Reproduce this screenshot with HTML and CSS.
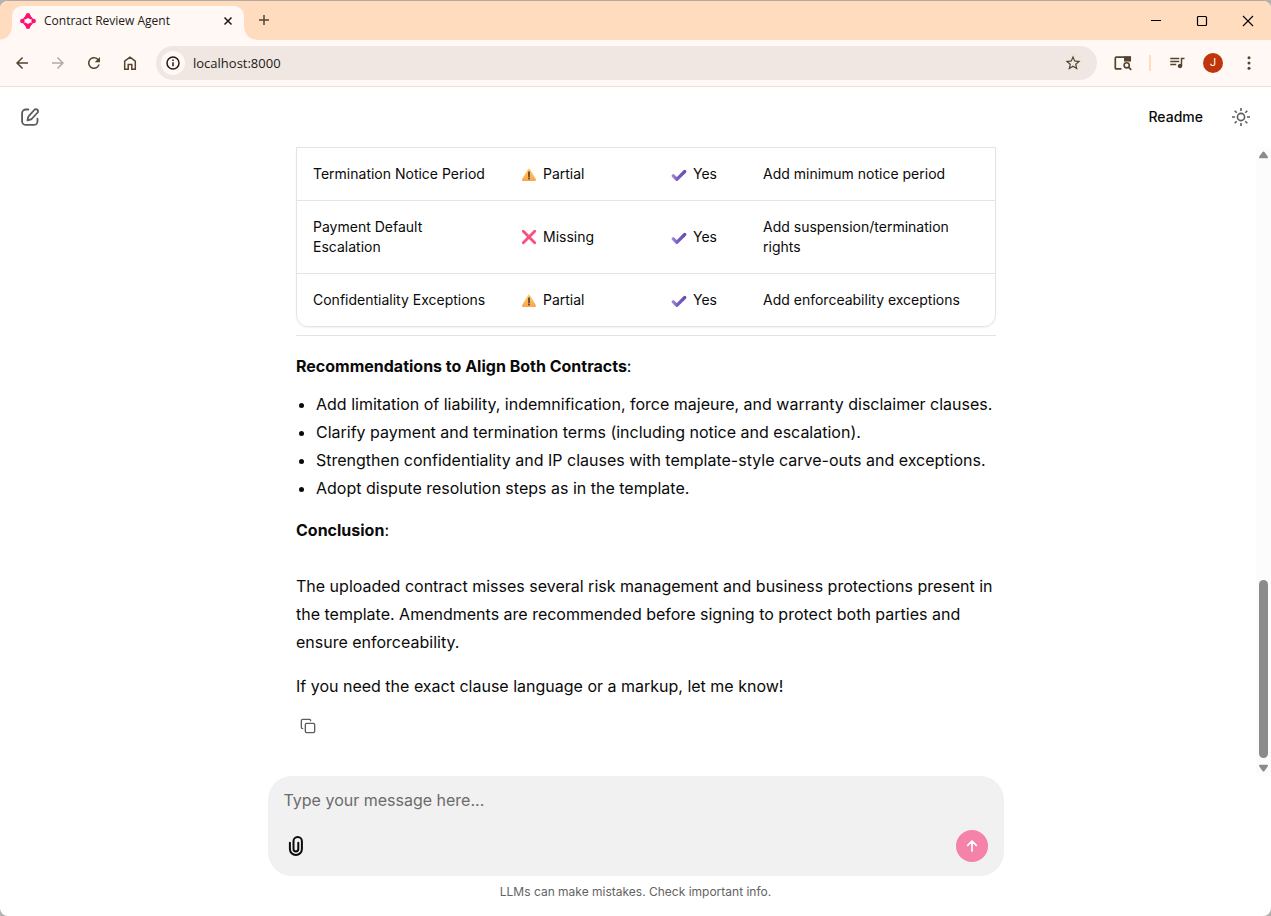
FILE: index.html
```html
<!DOCTYPE html>
<html lang="en">
<head>
<meta charset="utf-8">
<title>Contract Review Agent</title>
<link rel="stylesheet" href="styles.css">
</head>
<body>
<div class="window">
  <div class="tabstrip">
    <div class="tab">
      <svg class="favicon" viewBox="0 0 16 16" width="16" height="16"><circle cx="8" cy="8" r="4.600" fill="none" stroke="#ff0f72" stroke-width="1.700"/><g fill="#ff0f72"><circle cx="8" cy="2.300" r="2.200"/><circle cx="13.700" cy="8" r="2.200"/><circle cx="8" cy="13.700" r="2.200"/><circle cx="2.300" cy="8" r="2.200"/><path d="m5.900 1.800-1.700 3.600 1.200 1 2.600-1.300 2.600 1.300 1.200-1-1.700-3.600zM5.900 14.200l-1.700-3.600 1.200-1L8 10.900l2.600-1.300 1.200 1-1.700 3.600z"/></g></svg>
      <span class="tab-title">Contract Review Agent</span>
      <button class="tab-close" aria-label="Close tab"><svg viewBox="0 0 10 10" width="10" height="10"><path d="m1.500 1.500 7 7m0-7-7 7" fill="none" stroke="#1f1a17" stroke-width="1.500"/></svg></button>
    </div>
    <button class="new-tab" aria-label="New tab"><svg viewBox="0 0 12 12" width="12" height="12"><path d="M6 1v10M1 6h10" fill="none" stroke="#54432f" stroke-width="1.500"/></svg></button>
    <div class="window-controls">
      <button aria-label="Minimize"><svg viewBox="0 0 12 12" width="12" height="12"><path d="M1 5.500h10" stroke="#000"/></svg></button>
      <button aria-label="Maximize"><svg viewBox="0 0 12 12" width="12" height="12"><rect x="1.500" y="1.500" width="9" height="9" rx="1" fill="none" stroke="#000" stroke-width="1.200"/></svg></button>
      <button aria-label="Close"><svg viewBox="0 0 12 12" width="12" height="12"><path d="m1 1 10 10M11 1 1 11" stroke="#000" stroke-width="1.100"/></svg></button>
    </div>
  </div>

  <div class="toolbar">
    <div class="nav">
      <button aria-label="Back"><svg viewBox="0 0 24 24" width="18" height="18"><path d="M20 11H7.830l5.590-5.590L12 4l-8 8 8 8 1.410-1.410L7.830 13H20z"/></svg></button>
      <button class="muted" aria-label="Forward"><svg viewBox="0 0 24 24" width="18" height="18"><path d="M4 11h12.170l-5.590-5.590L12 4l8 8-8 8-1.410-1.410L16.170 13H4z"/></svg></button>
      <button aria-label="Reload"><svg viewBox="0 0 24 24" width="18" height="18"><path d="M17.650 6.350A7.958 7.958 0 0 0 12 4c-4.420 0-7.990 3.580-7.990 8s3.570 8 7.990 8c3.730 0 6.840-2.550 7.730-6h-2.080A5.990 5.990 0 0 1 12 18c-3.310 0-6-2.690-6-6s2.690-6 6-6c1.660 0 3.140.690 4.220 1.780L13 11h7V4z"/></svg></button>
      <button aria-label="Home"><svg viewBox="0 0 18 18" width="18" height="18"><path d="M3.700 15.300V7.100L9 3.100l5.300 4v8.200h-3.500v-4.900H7.200v4.900z" fill="none" stroke="currentColor" stroke-width="1.500"/></svg></button>
    </div>
    <div class="omnibox">
      <button class="site-info" aria-label="View site information"><svg viewBox="0 0 14 14" width="14" height="14"><circle cx="7" cy="7" r="6" fill="none" stroke="#201a17" stroke-width="1.500"/><path d="M7 6.200v4M7 3.500v1.500" stroke="#201a17" stroke-width="1.500"/></svg></button>
      <input class="address" type="text" aria-label="Address" value="localhost:8000">
      <button class="star" aria-label="Bookmark"><svg viewBox="0 0 24 24" width="18" height="18"><path d="m22 9.240-7.190-.620L12 2 9.190 8.630 2 9.240l5.460 4.730L5.820 21 12 17.270 18.180 21l-1.630-7.030zM12 15.400l-3.760 2.270 1-4.280-3.320-2.880 4.380-.380L12 6.100l1.710 4.040 4.380.380-3.320 2.880 1 4.280z"/></svg></button>
    </div>
    <div class="actions">
      <button aria-label="Search side panel"><svg viewBox="0 0 20 18" width="20" height="18"><path d="M8.500 14.800H3.300q-1 0-1-1V4.200q0-1 1-1h13.900v4" fill="none" stroke="currentColor" stroke-width="1.700"/><path d="M11 2.400h6q1 0 1 1v4h-7z"/><circle cx="13.700" cy="11.300" r="2.600" fill="none" stroke="currentColor" stroke-width="1.600"/><path d="m15.500 13.200 2.700 2.700" stroke="currentColor" stroke-width="1.700"/></svg></button>
      <span class="divider"></span>
      <button aria-label="Media controls"><svg viewBox="0 0 24 24" width="18" height="18"><path d="M15 5H3v2h12zm0 4H3v2h12zM3 15h8v-2H3zM17 5v8.180A3 3 0 0 0 13 16c0 1.660 1.340 3 3 3s3-1.340 3-3V7h3V5z"/></svg></button>
      <button aria-label="Profile"><span class="avatar">J</span></button>
      <button aria-label="Menu"><svg viewBox="0 0 18 18" width="18" height="18"><circle cx="9" cy="3.800" r="1.500"/><circle cx="9" cy="9" r="1.500"/><circle cx="9" cy="14.200" r="1.500"/></svg></button>
    </div>
  </div>

  <header class="app-header">
    <button class="icon-btn" aria-label="New chat"><svg viewBox="0 0 24 24" width="20" height="20" fill="none" stroke="currentColor" stroke-width="2.200" stroke-linecap="round" stroke-linejoin="round"><path d="M10 3H7a4.500 4.500 0 0 0-4.500 4.500V17A4.500 4.500 0 0 0 7 21.500h9.500A4.500 4.500 0 0 0 21 17v-3"/><path d="M17.300 3.300a2.500 2.500 0 0 1 3.600 3.600l-6.700 7.200q-.8.800-2 1.100l-3.200.800.700-3.300q.3-1.200 1.100-2z"/></svg></button>
    <div class="header-right">
      <button class="readme">Readme</button>
      <button class="icon-btn" aria-label="Toggle theme"><svg viewBox="0 0 20 20" width="20" height="20" fill="none" stroke="currentColor" stroke-width="1.600"><circle cx="10" cy="10" r="3.600"/><path d="M10 1v3M10 16v3M1 10h3M16 10h3M3.700 3.700l2 2M14.300 14.300l2 2M3.700 16.300l2-2M14.300 5.700l2-2"/></svg></button>
    </div>
  </header>

  <main class="chat">
    <div class="scroll">
      <article class="message">
        <div class="table-card">
          <table>
            <colgroup><col class="c1"><col class="c2"><col class="c3"><col></colgroup>
            <tbody>
              <tr><td>Termination Notice Period</td><td><span class="status"><svg class="mark" viewBox="0 0 16 16"><use href="#warn"/></svg>Partial</span></td><td><span class="status"><svg class="mark" viewBox="0 0 16 16"><use href="#check"/></svg>Yes</span></td><td>Add minimum notice period</td></tr>
              <tr><td>Payment Default Escalation</td><td><span class="status"><svg class="mark" viewBox="0 0 16 16"><use href="#cross"/></svg>Missing</span></td><td><span class="status"><svg class="mark" viewBox="0 0 16 16"><use href="#check"/></svg>Yes</span></td><td>Add suspension/termination rights</td></tr>
              <tr><td>Confidentiality Exceptions</td><td><span class="status"><svg class="mark" viewBox="0 0 16 16"><use href="#warn"/></svg>Partial</span></td><td><span class="status"><svg class="mark" viewBox="0 0 16 16"><use href="#check"/></svg>Yes</span></td><td>Add enforceability exceptions</td></tr>
            </tbody>
          </table>
        </div>
        <hr>
        <p class="lead"><strong>Recommendations to Align Both Contracts</strong>:</p>
        <ul>
          <li>Add limitation of liability, indemnification, force majeure, and warranty disclaimer clauses.</li>
          <li>Clarify payment and termination terms (including notice and escalation).</li>
          <li>Strengthen confidentiality and IP clauses with template-style carve-outs and exceptions.</li>
          <li>Adopt dispute resolution steps as in the template.</li>
        </ul>
        <p><strong>Conclusion</strong>:<br><br>The uploaded contract misses several risk management and business protections present in the template. Amendments are recommended before signing to protect both parties and ensure enforceability.</p>
        <p>If you need the exact clause language or a markup, let me know!</p>
        <button class="copy" aria-label="Copy"><svg viewBox="0 0 24 24" width="16" height="16" fill="none" stroke="currentColor" stroke-width="2" stroke-linecap="round" stroke-linejoin="round"><rect x="8" y="8" width="14" height="14" rx="2"/><path d="M4 16a2 2 0 0 1-2-2V4a2 2 0 0 1 2-2h10a2 2 0 0 1 2 2"/></svg></button>
      </article>
    </div>
    <div class="scrollbar">
      <svg viewBox="0 0 9 8" width="9" height="8"><path d="M3.500 1q1-1 2 0L9 6q0 1.200-1 1.200H1Q0 7.200 0 6z"/></svg>
      <div class="track"><div class="thumb"></div></div>
      <svg viewBox="0 0 9 8" width="9" height="8"><path d="M3.500 7q1 1 2 0L9 2Q9 .8 8 .8H1Q0 .8 0 2z"/></svg>
    </div>
  </main>

  <footer class="footer">
    <form class="composer">
      <textarea rows="1" aria-label="Message" placeholder="Type your message here..."></textarea>
      <div class="composer-row">
        <button type="button" class="attach" aria-label="Attach files"><svg viewBox="0 0 16 20" width="16" height="20" fill="none" stroke="currentColor" stroke-width="2" stroke-linecap="round"><path d="M1.900 6.800V13a6 6 0 0 0 12 0V5.200a4.200 4.200 0 0 0-8.400 0V13a2.400 2.400 0 0 0 4.800 0V6.800"/></svg></button>
        <button type="button" class="send" aria-label="Send"><svg viewBox="0 0 16 16" width="16" height="16" fill="none" stroke="#fff" stroke-width="1.700" stroke-linecap="round" stroke-linejoin="round"><path d="M8 13V3M3.700 7.300 8 3l4.300 4.300"/></svg></button>
      </div>
    </form>
    <p class="note">LLMs can make mistakes. Check important info.</p>
  </footer>
</div>

<svg class="defs" aria-hidden="true">
  <defs>
    <linearGradient id="amber" x1="0" y1="0" x2="0" y2="1"><stop offset="0" stop-color="#ffd05c"/><stop offset="1" stop-color="#fba34e"/></linearGradient>
    <linearGradient id="violet" x1="0" y1="0" x2="1" y2="0"><stop offset="0" stop-color="#9a86cf"/><stop offset=".4" stop-color="#7a58c4"/><stop offset="1" stop-color="#6b4fb0"/></linearGradient>
    <symbol id="warn" viewBox="0 0 16 16"><path d="M6.900 3.500Q8 1.600 9.100 3.500l5.800 9.700q.7 1.600-1 1.800H2.100q-1.700-.2-1-1.800z" fill="url(#amber)"/><path d="M8 6v4.400" stroke="#54423d" stroke-width="1.700" stroke-linecap="round"/><circle cx="8" cy="12.600" r="1" fill="#54423d"/></symbol>
    <symbol id="check" viewBox="0 0 16 16"><path d="m2.300 9.800 3.500 3.500L13.700 5.500" fill="none" stroke="url(#violet)" stroke-width="3.300" stroke-linecap="round" stroke-linejoin="round"/></symbol>
    <symbol id="cross" viewBox="0 0 16 16"><path d="m2.300 2.300 11.400 11.400m0-11.400L2.300 13.700" fill="none" stroke="#f9527f" stroke-width="2.900" stroke-linecap="round"/></symbol>
  </defs>
</svg>
</body>
</html>
```
FILE: styles.css
```css
* { box-sizing: border-box; }
body { margin: 0; background: #b4b2b0; color: #0a0a0a; font: 14px/20px Inter, sans-serif; }
button { display: flex; align-items: center; justify-content: center; margin: 0; padding: 0; border: 0; background: none; color: inherit; font: inherit; }
svg { display: block; flex: none; }
.defs { position: absolute; width: 0; height: 0; }

.window { display: flex; flex-direction: column; height: 100vh; overflow: hidden; border-top: 1px solid #b0aaa5; border-radius: 8px; background: #fff; }

.tabstrip { display: flex; align-items: flex-end; flex: none; height: 39px; padding-left: 12px; background: #ffdcbe; }
.tab { position: relative; display: flex; align-items: center; gap: 8px; width: 232px; height: 34px; padding: 0 8px 4px; border-radius: 10px 10px 0 0; background: #fff8f5; }
.tab::before, .tab::after { content: ""; position: absolute; bottom: 0; width: 12px; height: 12px; }
.tab::before { left: -12px; background: radial-gradient(circle at 0 0, transparent 11px, #fff8f5 12px); }
.tab::after { right: -12px; background: radial-gradient(circle at 100% 0, transparent 11px, #fff8f5 12px); }
.tab-title { flex: 1; color: #201a17; font: 12px/16px "Open Sans", sans-serif; }
.tab-close { width: 16px; height: 16px; }
.new-tab { width: 28px; height: 28px; margin: 0 0 6px 6px; }
.window-controls { display: flex; align-self: stretch; margin-left: auto; }
.window-controls button { width: 46px; }

.toolbar { display: flex; align-items: center; flex: none; height: 47px; padding: 0 8px; border-bottom: 1px solid #f0dfd0; background: #fff8f5; color: #54432f; }
.toolbar svg { fill: currentColor; }
.nav { display: flex; gap: 8px; }
.nav button, .actions button { width: 28px; height: 28px; }
.nav .muted { color: #b3a9a2; }
.omnibox { display: flex; align-items: center; flex: 1; height: 34px; margin: 0 12px; padding: 0 10px 0 5px; border-radius: 17px; background: #f0e7e2; }
.site-info { width: 24px; height: 24px; border-radius: 50%; background: #fff8f5; }
.address { flex: 1; min-width: 0; margin: 0; padding: 0 8px; border: 0; outline: 0; background: none; color: #201a17; font: 13px/20px "Open Sans", sans-serif; }
.star { width: 28px; height: 28px; }
.actions { display: flex; align-items: center; gap: 8px; }
.divider { width: 2px; height: 16px; margin: 0 4px; background: #ffdcbe; }
.avatar { width: 20px; height: 20px; border-radius: 50%; background: #bf360c; color: #fff; font: 11px/20px Roboto, sans-serif; text-align: center; }

.app-header { display: flex; align-items: center; justify-content: space-between; flex: none; height: 60px; padding: 0 12px; }
.header-right { display: flex; align-items: center; gap: 20px; }
.icon-btn { width: 36px; height: 36px; color: #5c5c5c; }
.readme { font-weight: 500; }

.chat { display: flex; flex: 1; min-height: 0; }
.scroll { flex: 1; min-width: 0; overflow: hidden; padding-left: 16px; }
.message { max-width: 736px; margin: 0 auto; padding: 0 8px 0 28px; font-size: 16px; line-height: 28px; }
.table-card { overflow: hidden; border: 1px solid #e4e4e7; border-radius: 0 0 12px 12px; box-shadow: 0 1px 2px rgba(0, 0, 0, .06); }
table { width: 100%; border-collapse: collapse; table-layout: fixed; font-size: 14px; line-height: 20px; }
.c1 { width: 208px; }
.c2 { width: 150px; }
.c3 { width: 92px; }
td { padding: 16px; vertical-align: middle; }
tr + tr td { border-top: 1px solid #e4e4e7; }
td:nth-child(3) { padding-right: 0; }
.status { display: flex; align-items: center; gap: 6px; }
.mark { width: 16px; height: 16px; }
hr { height: 1px; margin: 8px 0 16px; border: 0; background: #e4e4e7; }
p { margin: 0 0 16px; }
.lead { margin-bottom: 10px; }
strong { font-weight: 700; }
ul { margin: 0 0 14px; padding-left: 20px; }
.copy { width: 24px; height: 24px; margin-top: -2px; color: #5c5c5c; }

.scrollbar { display: flex; flex-direction: column; align-items: center; width: 15px; padding: 4px 0; background: #fcfcfc; fill: #8b8b8b; }
.track { display: flex; flex: 1; flex-direction: column; justify-content: flex-end; width: 9px; padding: 6px 0; }
.thumb { height: 30%; border-radius: 5px; background: #8b8b8b; }

.footer { flex: none; padding: 0 16px 16px; }
.composer { display: flex; flex-direction: column; gap: 16px; max-width: 736px; margin: 0 auto; padding: 12px 16px 14px; border-radius: 24px; background: #f1f1f1; }
textarea { display: block; width: 100%; height: 26px; margin: 0; padding: 0; border: 0; outline: 0; resize: none; overflow: hidden; background: none; color: inherit; font: 16px/24px Inter, sans-serif; }
textarea::placeholder { color: #6b6b6b; opacity: 1; }
.composer-row { display: flex; align-items: center; justify-content: space-between; }
.attach { width: 24px; height: 32px; }
.send { width: 32px; height: 32px; border-radius: 50%; background: #f582a9; }
.note { margin: 8px 0 0; color: #636363; font-size: 12px; line-height: 16px; text-align: center; }
```
